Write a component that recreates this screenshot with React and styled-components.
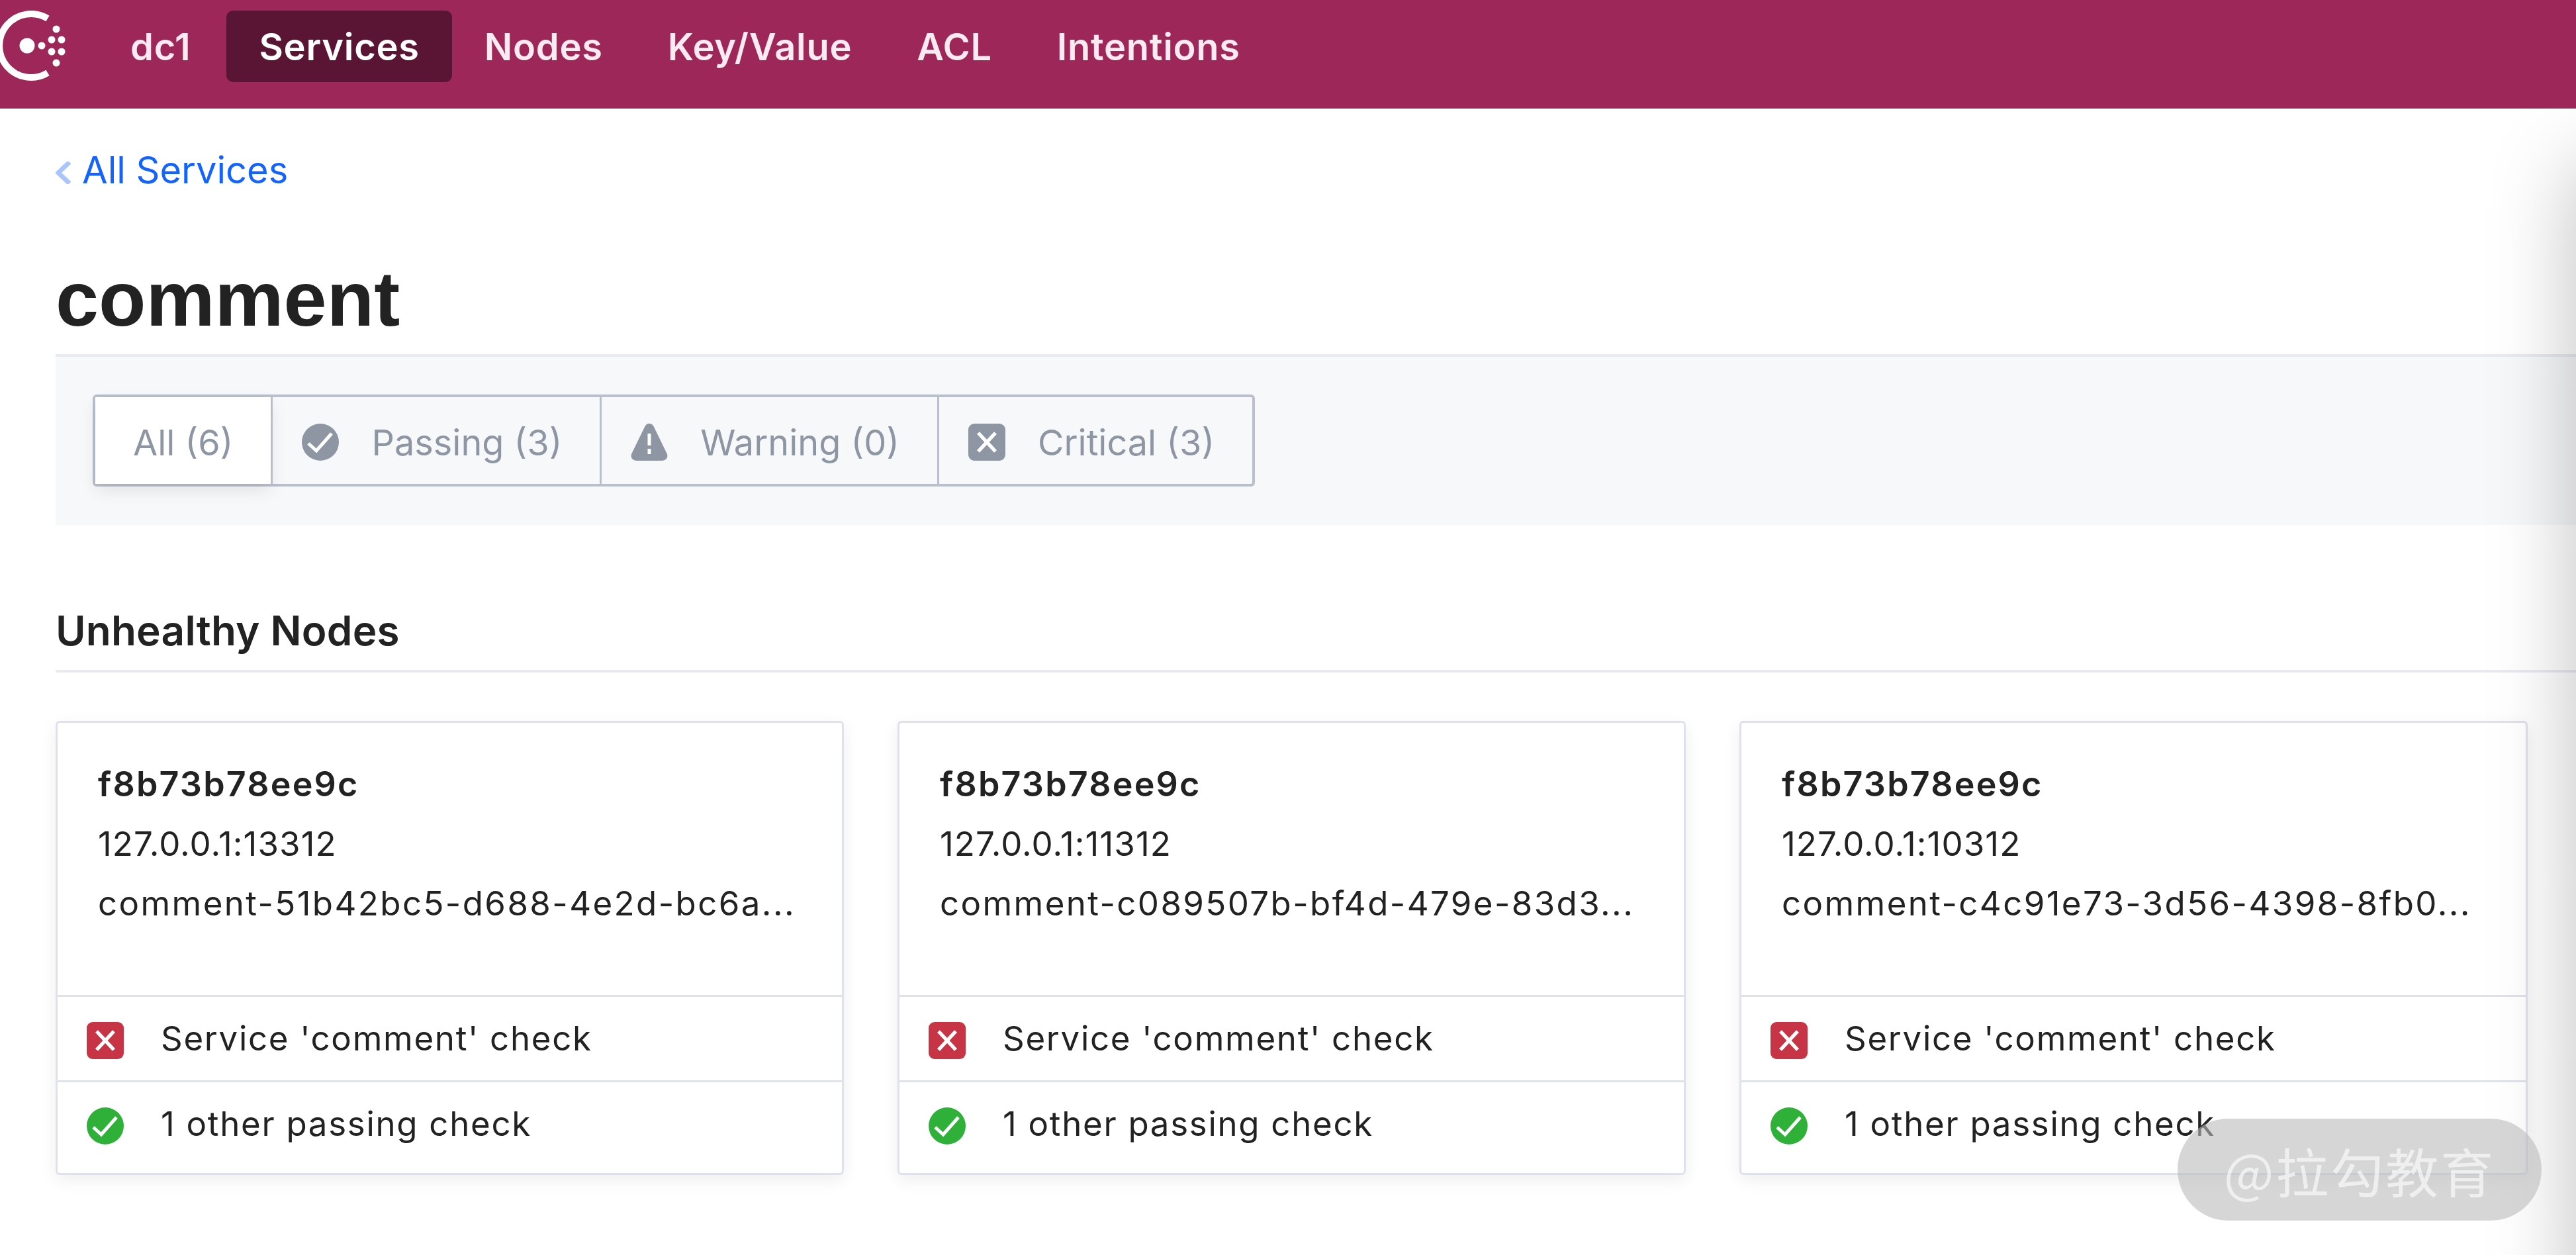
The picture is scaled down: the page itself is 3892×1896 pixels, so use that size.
import React from 'react';
import styled, { createGlobalStyle } from 'styled-components';

const GlobalStyle = createGlobalStyle`
    html, body {
        margin: 0;
        padding: 0;
        height: 100%;
        background: #fff;
        overflow: hidden;
    }
    body {
        font-family: Inter, "Liberation Sans", sans-serif;
        color: #222;
    }
`;

const Header = styled.header`
    position: relative;
    z-index: 2;
    display: flex;
    align-items: flex-start;
    box-sizing: border-box;
    height: 164px;
    padding-top: 16px;
    background: #9e2759;
`;

const Logo = styled.svg`
    display: block;
    flex: none;
    width: 148px;
    height: 108px;
`;

const Nav = styled.nav`
    display: flex;
`;

const NavItem = styled.a`
    height: 108px;
    margin-left: ${props => (props.$active ? '5px' : '0')};
    padding: 0 49px;
    border-radius: 10px;
    background: ${props => (props.$active ? '#5a1434' : 'transparent')};
    color: ${props => (props.$active ? '#fff' : '#fbeaf1')};
    font-size: 56px;
    font-weight: 600;
    letter-spacing: 0.7px;
    line-height: 111px;
`;

const Main = styled.main`
    padding: 63px 0 0 84px;
`;

const BackLink = styled.a`
    display: flex;
    align-items: center;
    gap: 16px;
    height: 60px;
    color: #1563ff;
    font-size: 56px;
    line-height: 60px;
`;

const Chevron = styled.svg`
    width: 24px;
    height: 34px;
    margin-top: 8px;
    fill: none;
    stroke: #a9c5fc;
    stroke-width: 7;
`;

const Title = styled.h1`
    margin: 105px 0 0;
    padding-bottom: 23px;
    border-bottom: 4px solid #e8eaf0;
    color: #222;
    font-family: "Liberation Sans", Arial, sans-serif;
    font-size: 117px;
    font-weight: 700;
    line-height: 120px;
`;

const FilterBar = styled.div`
    padding: 57px 0 58px 56px;
    background: #f7f8fa;
`;

const FilterGroup = styled.div`
    display: inline-flex;
    box-sizing: border-box;
    height: 139px;
    border: 4px solid #b9bfcc;
    border-radius: 6px;
`;

const FilterTab = styled.div`
    display: flex;
    align-items: center;
    gap: 49px;
    padding: 5px 57px 0 44px;
    color: #8e96a3;
    font-size: 54px;

    & + & {
        border-left: 3px solid #b9bfcc;
    }

    &.active {
        padding: 5px 57px 0;
        background: #fff;
        box-shadow: 0 10px 24px rgba(0, 0, 0, 0.09);
    }
`;

const StatusIcon = styled.svg`
    display: block;
    flex: none;
    width: 56px;
    height: 56px;
    color: ${props => props.$tone};
`;

const SectionTitle = styled.h2`
    margin: 125px 0 0;
    padding-bottom: 24px;
    border-bottom: 4px solid #e8eaf0;
    color: #222;
    font-size: 62px;
    font-weight: 600;
    letter-spacing: 0.2px;
    line-height: 70px;
`;

const CardGrid = styled.div`
    display: grid;
    grid-template-columns: repeat(3, 1191px);
    gap: 81px;
    margin-top: 73px;
`;

const Card = styled.article`
    display: flex;
    flex-direction: column;
    box-sizing: border-box;
    height: 686px;
    border: 3px solid #dfe2ea;
    border-radius: 6px;
    background: #fff;
    box-shadow: 0 8px 26px rgba(0, 0, 0, 0.07);
`;

const CardHead = styled.div`
    flex: 1;
    padding: 48px 0 0 61px;
    font-size: 51px;
    line-height: 90px;
    white-space: nowrap;
`;

const NodeName = styled.div`
    font-size: 52px;
    font-weight: 600;
    letter-spacing: 2.2px;
`;

const NodeAddress = styled.div`
    letter-spacing: 1.1px;
`;

const NodeId = styled.div`
    letter-spacing: 2.4px;
`;

const CheckRow = styled.div`
    display: flex;
    align-items: flex-start;
    gap: 56px;
    box-sizing: border-box;
    height: 129px;
    padding: 38px 0 0 44px;
    border-top: 3px solid #dfe2ea;
    font-size: 51px;
    letter-spacing: 1.7px;
    line-height: 50px;

    &:last-child {
        height: 140px;
    }
`;

const Drawer = styled.div`
    position: fixed;
    top: 250px;
    bottom: -300px;
    left: 100%;
    width: 200px;
    z-index: 1;
    box-shadow: 0 0 130px rgba(0, 0, 0, 0.26);
`;

const Watermark = styled.div`
    position: fixed;
    z-index: 3;
    right: 52px;
    bottom: 52px;
    width: 550px;
    height: 154px;
    border-radius: 77px;
    background: rgba(186, 186, 186, 0.6);
    color: rgba(255, 255, 255, 0.62);
    font-family: "Noto Sans CJK SC", sans-serif;
    font-size: 80px;
    letter-spacing: 3px;
    line-height: 154px;
    text-align: center;
`;

const ConsulLogo = () => (
    <Logo viewBox="0 16 148 108">
        <path d="M72 28 A48 48 0 1 0 72 110" fill="none" stroke="#fff" strokeWidth="10" />
        <g fill="#fff">
            <circle cx="41" cy="69" r="11.5" />
            <circle cx="63" cy="69" r="5.5" />
            <circle cx="78" cy="60" r="5.5" />
            <circle cx="93" cy="60" r="5.5" />
            <circle cx="78" cy="78" r="5.5" />
            <circle cx="93" cy="78" r="5.5" />
            <circle cx="85" cy="44" r="5.5" />
            <circle cx="85" cy="95" r="5.5" />
        </g>
    </Logo>
);

const CheckIcon = ({ tone }) => (
    <StatusIcon $tone={tone} viewBox="0 0 56 56">
        <circle cx="28" cy="28" r="28" fill="currentColor" />
        <path d="M10 30 L22 41 L45 15" fill="none" stroke="#fff" strokeWidth="5" />
    </StatusIcon>
);

const CrossIcon = ({ tone }) => (
    <StatusIcon $tone={tone} viewBox="0 0 56 56">
        <rect width="56" height="56" rx="9" fill="currentColor" />
        <path d="M15 14 L41 42 M41 14 L15 42" fill="none" stroke="#fff" strokeWidth="5.5" />
    </StatusIcon>
);

const WarningIcon = ({ tone }) => (
    <StatusIcon $tone={tone} viewBox="0 0 56 56">
        <path d="M21 5 C24 -2 32 -2 35 5 L54 44 C58 51 53 56 47 56 L9 56 C3 56 -2 51 2 44 Z" fill="currentColor" />
        <rect x="25.5" y="15" width="5" height="18" fill="#fff" />
        <rect x="25.5" y="38" width="5" height="8" fill="#fff" />
    </StatusIcon>
);

const navItems = ['Services', 'Nodes', 'Key/Value', 'ACL', 'Intentions'];

const nodes = [
    { ip: '127.0.0.1:13312', id: 'comment-51b42bc5-d688-4e2d-bc6a...' },
    { ip: '127.0.0.1:11312', id: 'comment-c089507b-bf4d-479e-83d3...' },
    { ip: '127.0.0.1:10312', id: 'comment-c4c91e73-3d56-4398-8fb0...' },
];

const GREY = '#8e96a3';

const App = () => (
    <>
        <GlobalStyle />
        <Header>
            <ConsulLogo />
            <Nav>
                <NavItem>dc1</NavItem>
                {navItems.map(item => (
                    <NavItem key={item} $active={item === 'Services'}>{item}</NavItem>
                ))}
            </Nav>
        </Header>
        <Main>
            <BackLink>
                <Chevron viewBox="0 0 24 34"><path d="M21 1 L4 17 L21 33" /></Chevron>
                All Services
            </BackLink>
            <Title>comment</Title>
            <FilterBar>
                <FilterGroup>
                    <FilterTab className="active">All (6)</FilterTab>
                    <FilterTab><CheckIcon tone={GREY} />Passing (3)</FilterTab>
                    <FilterTab><WarningIcon tone={GREY} />Warning (0)</FilterTab>
                    <FilterTab><CrossIcon tone={GREY} />Critical (3)</FilterTab>
                </FilterGroup>
            </FilterBar>
            <SectionTitle>Unhealthy Nodes</SectionTitle>
            <CardGrid>
                {nodes.map(node => (
                    <Card key={node.ip}>
                        <CardHead>
                            <NodeName>f8b73b78ee9c</NodeName>
                            <NodeAddress>{node.ip}</NodeAddress>
                            <NodeId>{node.id}</NodeId>
                        </CardHead>
                        <CheckRow><CrossIcon tone="#c73445" />Service 'comment' check</CheckRow>
                        <CheckRow><CheckIcon tone="#2eb039" />1 other passing check</CheckRow>
                    </Card>
                ))}
            </CardGrid>
        </Main>
        <Drawer />
        <Watermark>@拉勾教育</Watermark>
    </>
);

export default App;
